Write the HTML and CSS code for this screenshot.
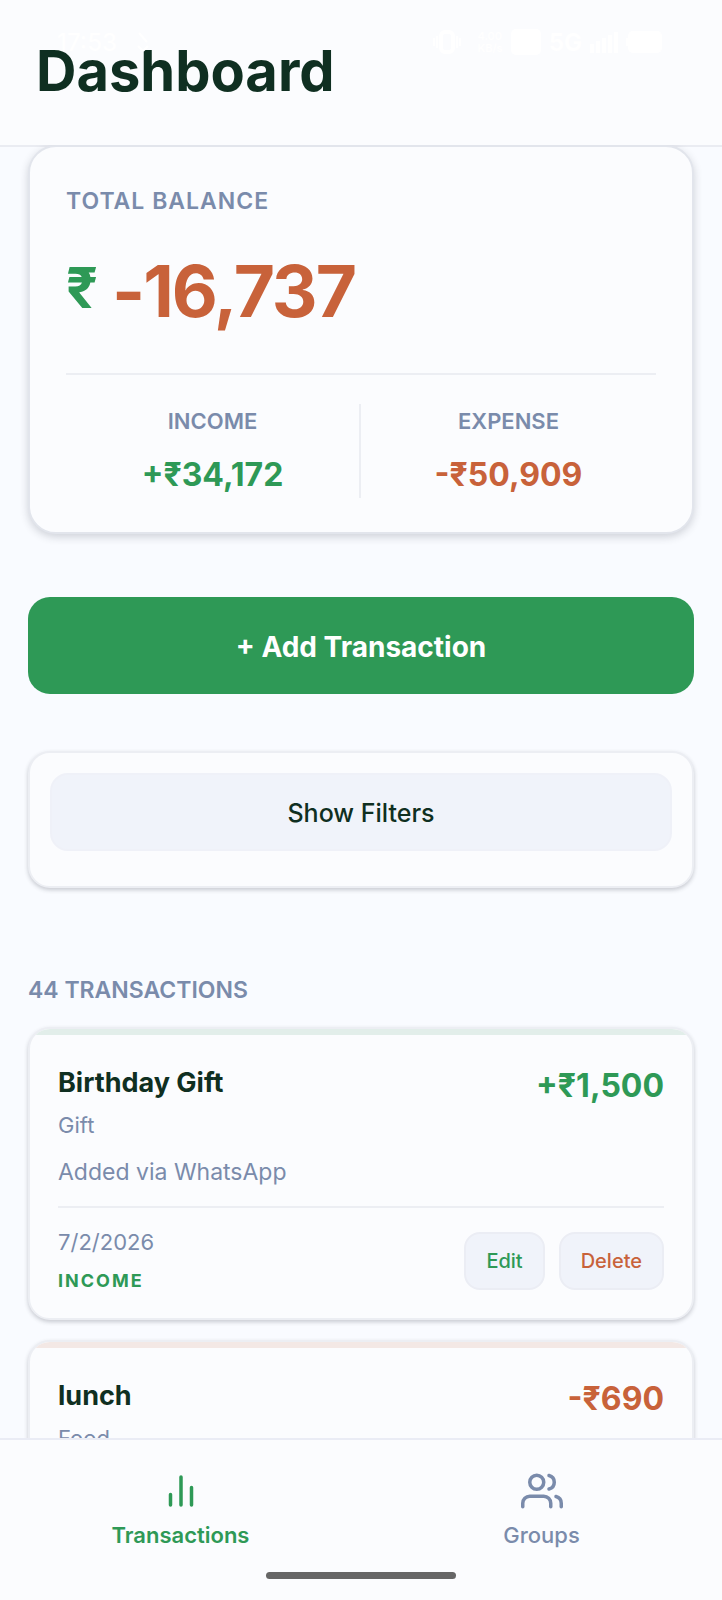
FILE: index.html
```html
<!DOCTYPE html>
<html lang="en">
<head>
<meta charset="utf-8">
<meta name="viewport" content="width=device-width, initial-scale=1">
<title>Dashboard</title>
<link rel="stylesheet" href="styles.css">
</head>
<body>
<div class="app">
  <header class="header">
    <h1 class="header-title">Dashboard</h1>
  </header>

  <div class="status" aria-hidden="true">
    <span class="status-time">17:53</span>
    <svg class="status-arrow" width="12" height="20" viewBox="0 0 12 20"><path d="M2 1l8 9M6 19l-5-5M6 19l5-5" /></svg>
    <span class="status-icons">
      <svg width="28" height="24" viewBox="0 0 28 24"><rect x="8" y="2" width="12" height="20" rx="4" fill="none" stroke="#fff" stroke-width="4"/><path d="M1 8v8M4 6v12M24 6v12M27 8v8" stroke="#fff" stroke-width="2"/></svg>
      <span class="status-rate"><span>4.00</span><span>KB/s</span></span>
      <svg width="30" height="26" viewBox="0 0 30 26"><rect width="30" height="26" rx="5" fill="#fff"/></svg>
      <span class="status-net">5G</span>
      <svg width="28" height="22" viewBox="0 0 28 22"><path d="M2 22v-9M8 22v-12M14 22v-15M20 22V4M26 22V1" stroke="#fff" stroke-width="4"/></svg>
      <svg width="36" height="22" viewBox="0 0 36 22"><rect x="2" width="34" height="22" rx="5" fill="#fff"/><rect y="7" width="4" height="8" fill="#fff"/></svg>
    </span>
  </div>

  <main class="content">
    <section class="card balance">
      <h2 class="balance-label">TOTAL BALANCE</h2>
      <p class="balance-row"><span class="balance-currency">₹</span><span class="balance-amount">-16,737</span></p>
      <div class="totals">
        <div class="total">
          <span class="total-label">INCOME</span>
          <span class="total-value income">+₹34,172</span>
        </div>
        <div class="total">
          <span class="total-label">EXPENSE</span>
          <span class="total-value expense">-₹50,909</span>
        </div>
      </div>
    </section>

    <button class="add-button" type="button">+ Add Transaction</button>

    <section class="card filters">
      <button class="filter-button" type="button">Show Filters</button>
    </section>

    <h2 class="list-title">44 TRANSACTIONS</h2>

    <div class="list">
      <article class="card transaction">
        <div class="strip strip-income"></div>
        <div class="transaction-body">
          <div class="transaction-head">
            <h3 class="transaction-title">Birthday Gift</h3>
            <span class="transaction-amount income">+₹1,500</span>
          </div>
          <p class="transaction-category">Gift</p>
          <p class="transaction-note">Added via WhatsApp</p>
          <div class="transaction-foot">
            <div class="transaction-meta">
              <span class="transaction-date">7/2/2026</span>
              <span class="transaction-type income">INCOME</span>
            </div>
            <div class="actions">
              <button class="action income" type="button">Edit</button>
              <button class="action expense" type="button">Delete</button>
            </div>
          </div>
        </div>
      </article>

      <article class="card transaction">
        <div class="strip strip-expense"></div>
        <div class="transaction-body">
          <div class="transaction-head">
            <h3 class="transaction-title">lunch</h3>
            <span class="transaction-amount expense">-₹690</span>
          </div>
          <p class="transaction-category">Food</p>
        </div>
      </article>
    </div>
  </main>

  <nav class="nav">
    <a class="nav-item nav-active" href="#transactions">
      <svg class="nav-icon" viewBox="0 0 24 24"><path d="M18 20V10M12 20V4M6 20v-6"/></svg>
      <span>Transactions</span>
    </a>
    <a class="nav-item" href="#groups">
      <svg class="nav-icon" viewBox="0 0 24 24"><path d="M17 21v-2a4 4 0 0 0-4-4H5a4 4 0 0 0-4 4v2"/><circle cx="9" cy="7" r="4"/><path d="M23 21v-2a4 4 0 0 0-3-3.87M16 3.13a4 4 0 0 1 0 7.75"/></svg>
      <span>Groups</span>
    </a>
    <div class="home-bar"></div>
  </nav>
</div>
</body>
</html>
```
FILE: styles.css
```css
* {
  box-sizing: border-box;
}

body,
h1,
h2,
h3,
p {
  margin: 0;
}

body {
  font-family: Inter, "Liberation Sans", sans-serif;
  background: #f9fbff;
  color: #0f2f21;
}

button {
  font: inherit;
  cursor: pointer;
}

.app {
  position: relative;
  display: flex;
  flex-direction: column;
  height: 100vh;
}

.header {
  flex: none;
  padding: 35px 36px 38px;
  background: #fbfcfe;
  border-bottom: 2px solid #eaecf2;
}

.header-title {
  font-size: 56px;
  line-height: 72px;
  font-weight: 700;
}

.status {
  position: absolute;
  top: 28px;
  left: 0;
  right: 0;
  display: flex;
  align-items: center;
  height: 28px;
  padding: 0 60px 0 57px;
  color: #fff;
}

.status-time {
  font-size: 24px;
  font-weight: 500;
}

.status-arrow {
  margin-left: 20px;
  fill: none;
  stroke: #fff;
  stroke-width: 2;
}

.status-icons {
  display: flex;
  align-items: center;
  gap: 8px;
  margin-left: auto;
}

.status-rate {
  display: flex;
  flex-direction: column;
  padding-left: 8px;
  font-size: 11px;
  line-height: 12px;
  font-weight: 600;
}

.status-net {
  font-size: 24px;
  font-weight: 700;
}

.content {
  position: relative;
  flex: 1;
  min-height: 0;
  margin-top: -2px;
  padding: 0 28px;
  overflow-y: auto;
  scrollbar-width: none;
}

.card {
  background: #fbfcfe;
  border: 2px solid #eceef3;
  border-radius: 22px;
  box-shadow: 0 2px 4px rgba(40, 45, 60, 0.24);
}

.income {
  color: #2e9956;
}

.expense {
  color: #c8623a;
}

.balance {
  padding: 36px 36px 34px;
  border-color: #e2e5ec;
  border-radius: 28px;
  box-shadow: 0 3px 8px rgba(40, 45, 60, 0.2);
}

.balance-label {
  font-size: 23px;
  line-height: 36px;
  font-weight: 600;
  letter-spacing: 1px;
  color: #7a8bab;
}

.balance-row {
  display: flex;
  align-items: flex-start;
  gap: 14px;
  margin: 28px 0 38px;
  font-weight: 700;
}

.balance-currency {
  font-size: 56px;
  line-height: 82px;
  color: #2e9956;
}

.balance-amount {
  font-size: 71px;
  line-height: 88px;
  letter-spacing: -2px;
  color: #c8623a;
}

.totals {
  display: grid;
  grid-template-columns: 1fr 1fr;
  padding-top: 29px;
  border-top: 2px solid #eceef3;
}

.total {
  display: flex;
  flex-direction: column;
  align-items: center;
  gap: 14px;
}

.total:first-child {
  border-right: 2px solid #eceef3;
}

.total-label {
  font-size: 22px;
  line-height: 34px;
  font-weight: 600;
  color: #7a8bab;
}

.total-value {
  font-size: 32px;
  line-height: 46px;
  font-weight: 700;
}

.add-button {
  display: block;
  width: 100%;
  margin-top: 63px;
  padding: 30px 28px 26px;
  border: 0;
  border-radius: 22px;
  background: #2e9956;
  color: #fff;
  font-size: 28px;
  line-height: 41px;
  font-weight: 700;
}

.filters {
  margin-top: 57px;
  padding: 20px 20px 35px;
}

.filter-button {
  display: block;
  width: 100%;
  padding: 21px 20px 19px;
  border: 2px solid #eff1f8;
  border-radius: 18px;
  background: #f0f3fa;
  color: #0f2f21;
  font-size: 25px;
  line-height: 34px;
  font-weight: 500;
}

.list-title {
  margin-top: 84px;
  font-size: 23px;
  line-height: 36px;
  font-weight: 600;
  color: #7a8bab;
}

.list {
  display: flex;
  flex-direction: column;
  gap: 20px;
  padding: 19px 0;
}

.transaction {
  overflow: hidden;
  flex: none;
}

.strip {
  height: 6px;
}

.strip-income {
  background: #e2eeea;
}

.strip-expense {
  background: #f3e8e5;
}

.transaction-body {
  padding: 28px 28px 23px;
}

.transaction-head {
  display: flex;
  justify-content: space-between;
}

.transaction-title {
  font-size: 27px;
  line-height: 40px;
  font-weight: 700;
}

.transaction-amount {
  font-size: 32px;
  line-height: 46px;
  font-weight: 700;
}

.transaction-category {
  font-size: 22px;
  line-height: 32px;
  color: #7a8bab;
}

.transaction-note {
  margin-top: 13px;
  font-size: 23px;
  line-height: 36px;
  color: #7a8bab;
}

.transaction-foot {
  display: flex;
  align-items: center;
  justify-content: space-between;
  margin-top: 16px;
  padding-top: 18px;
  border-top: 2px solid #eceef3;
}

.transaction-meta {
  display: flex;
  flex-direction: column;
  gap: 9px;
}

.transaction-date {
  font-size: 22px;
  line-height: 32px;
  color: #7a8bab;
}

.transaction-type {
  font-size: 18px;
  line-height: 28px;
  font-weight: 700;
  letter-spacing: 2px;
}

.actions {
  display: flex;
  gap: 14px;
}

.action {
  padding: 13px 20px;
  border: 2px solid #ebedf4;
  border-radius: 16px;
  background: #f0f3fa;
  font-size: 20px;
  line-height: 28px;
  font-weight: 500;
}

.nav {
  position: relative;
  flex: none;
  display: grid;
  grid-template-columns: 1fr 1fr;
  padding: 30px 0 51px;
  background: #fbfcfe;
  border-top: 2px solid #eaecf5;
}

.nav-item {
  display: flex;
  flex-direction: column;
  align-items: center;
  gap: 9px;
  font-size: 22px;
  line-height: 28px;
  font-weight: 500;
  color: #7a8bab;
  text-decoration: none;
}

.nav-active {
  font-weight: 600;
  color: #2e9956;
}

.nav-icon {
  width: 42px;
  height: 42px;
  fill: none;
  stroke: currentColor;
  stroke-width: 2;
  stroke-linecap: round;
  stroke-linejoin: round;
  overflow: visible;
}

.home-bar {
  position: absolute;
  bottom: 21px;
  left: 50%;
  width: 190px;
  height: 7px;
  margin-left: -95px;
  border-radius: 4px;
  background: #666;
}
```
